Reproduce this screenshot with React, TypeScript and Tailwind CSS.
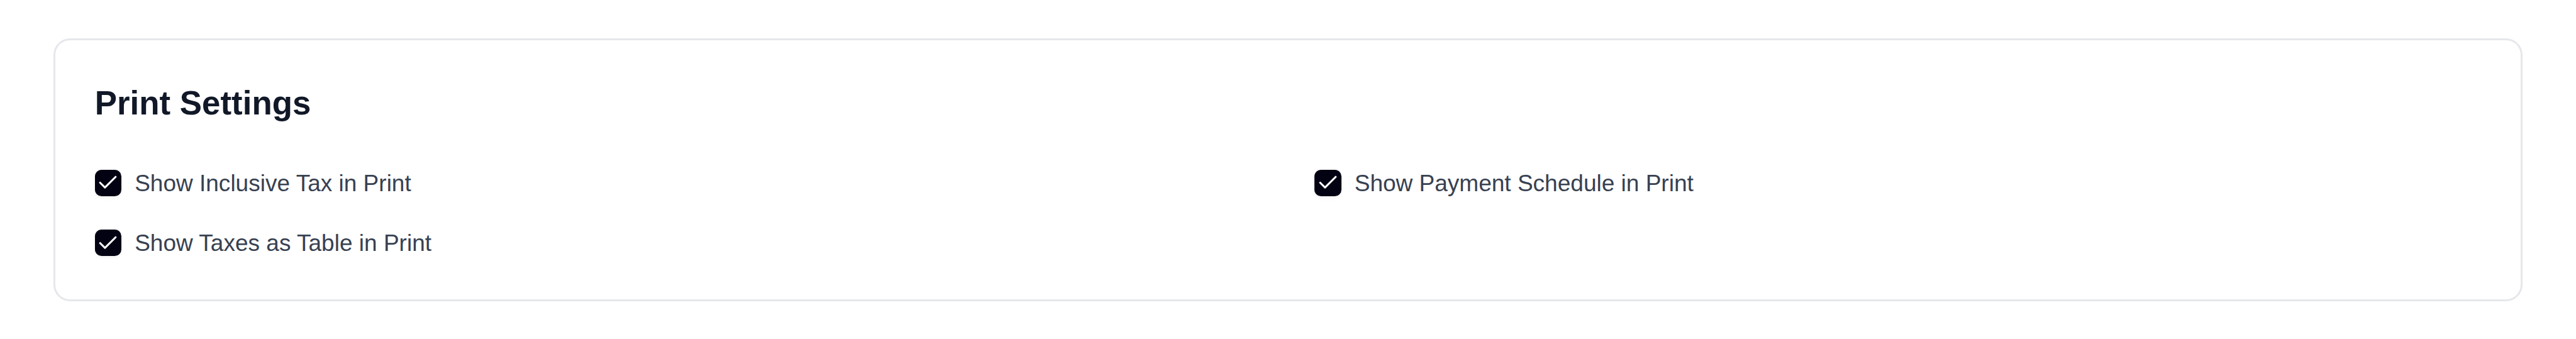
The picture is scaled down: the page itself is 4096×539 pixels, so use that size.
import React, { useState } from 'react';
import { Check } from 'lucide-react';

interface PrintOption {
  id: string;
  label: string;
}

const OPTIONS: PrintOption[] = [
  { id: 'inclusiveTax', label: 'Show Inclusive Tax in Print' },
  { id: 'paymentSchedule', label: 'Show Payment Schedule in Print' },
  { id: 'taxesAsTable', label: 'Show Taxes as Table in Print' },
];

interface CheckboxFieldProps {
  label: string;
  checked: boolean;
  onToggle: () => void;
}

const CheckboxField: React.FC<CheckboxFieldProps> = ({ label, checked, onToggle }) => (
  <div className="flex items-center gap-[21.15px] h-[42.3px]">
    <button
      type="button"
      role="checkbox"
      aria-checked={checked}
      aria-label={label}
      onClick={onToggle}
      className={`flex items-center justify-center shrink-0 w-[42.3px] h-[42.3px] rounded-[10.6px] shadow-[0_2.6px_5.3px_rgba(0,0,0,0.05)] ${
        checked ? 'bg-[#030213] text-white' : 'bg-[#f3f3f5] text-transparent'
      }`}
    >
      <Check size={37} />
    </button>
    <span className="text-[37.02px] leading-[42.3px] text-[#374151] whitespace-nowrap">{label}</span>
  </div>
);

const App: React.FC = () => {
  const [values, setValues] = useState<Record<string, boolean>>({
    inclusiveTax: true,
    paymentSchedule: true,
    taxesAsTable: true,
  });

  const toggle = (id: string) => {
    setValues(prev => ({ ...prev, [id]: !prev[id] }));
  };

  return (
    <div className="h-screen bg-white pt-[60.8px] pl-[84.6px] pr-[84.7px] font-['Liberation_Sans',Arial,sans-serif]">
      <div className="h-[417.8px] rounded-[26.4px] border-[3px] border-[#e5e7eb] bg-white pt-[63.1px] px-[63.1px]">
        <h2 className="text-[52.89px] leading-[74px] font-bold text-[#111827]">Print Settings</h2>
        <div className="mt-[68.8px] grid grid-cols-2 gap-x-[84.6px] gap-y-[52.9px]">
          {OPTIONS.map(option => (
            <CheckboxField
              key={option.id}
              label={option.label}
              checked={values[option.id]}
              onToggle={() => toggle(option.id)}
            />
          ))}
        </div>
      </div>
    </div>
  );
};

export default App;
